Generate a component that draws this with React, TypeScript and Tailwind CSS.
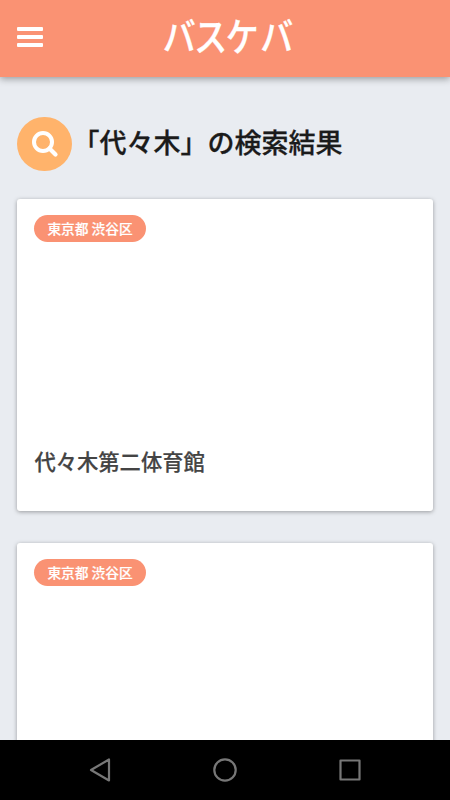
import { useState } from 'react'

type Court = {
  id: number
  area: string
  name?: string
}

const courts: Court[] = [
  { id: 1, area: '東京都 渋谷区', name: '代々木第二体育館' },
  { id: 2, area: '東京都 渋谷区' },
]

const Header = () => {
  const [open, setOpen] = useState(false)

  return (
    <header className="relative z-10 flex h-[77px] shrink-0 items-center bg-[#fa9273] px-[17px] shadow-[0_2px_7px_rgba(0,0,0,0.35)]">
      <button
        type="button"
        aria-label="メニュー"
        aria-expanded={open}
        onClick={() => setOpen(!open)}
        className="mb-[3px] flex w-[26px] flex-col gap-1"
      >
        <span className="h-1 rounded-[1px] bg-white" />
        <span className="h-1 rounded-[1px] bg-white" />
        <span className="h-1 rounded-[1px] bg-white" />
      </button>
      <h1 className="flex flex-1 justify-center pr-[19px]">
        <svg
          width="150"
          height="76"
          viewBox="0 -8 150 76"
          fill="#fff"
          stroke="#fff"
          strokeWidth="0.3"
          className="overflow-visible"
        >
          <text
            x="9 41.5 74 109.5"
            y="37.8"
            fontSize="34"
            transform="scale(0.97 1.12)"
            className="font-medium"
          >
            バスケバ
          </text>
        </svg>
      </h1>
    </header>
  )
}

const CourtCard = ({ court }: { court: Court }) => (
  <article className="flex h-[312px] shrink-0 flex-col items-start justify-between rounded-[3px] bg-white px-[17px] pt-4 pb-[34px] shadow-[0_1px_4px_rgba(0,0,0,0.35)]">
    <span className="flex h-[27px] items-center rounded-full bg-[#fa9273] px-[13px] text-[13.7px] font-medium text-white [-webkit-text-stroke:0.2px_#fff]">
      {court.area}
    </span>
    {court.name && (
      <h3 className="text-[21.3px] leading-8 font-medium text-[#444] [-webkit-text-stroke:0.2px_#444]">
        {court.name}
      </h3>
    )}
  </article>
)

const NavigationBar = () => (
  <footer className="flex h-[60px] shrink-0 items-center justify-center gap-[97px] bg-black">
    <svg width="28" height="28" viewBox="0 0 28 28" fill="none" stroke="#777" strokeWidth="2.2" strokeLinejoin="round">
      <path d="M23 3.5v21L5 14z" />
    </svg>
    <svg width="28" height="28" viewBox="0 0 28 28" fill="none" stroke="#777" strokeWidth="2.2">
      <circle cx="14" cy="14" r="10.7" />
    </svg>
    <svg width="28" height="28" viewBox="0 0 28 28" fill="none" stroke="#777" strokeWidth="2.2" strokeLinejoin="round">
      <rect x="4.5" y="4.5" width="19" height="19" />
    </svg>
  </footer>
)

const App = () => {
  return (
    <div className="flex h-[800px] w-[450px] flex-col overflow-hidden bg-[#e9ecf1] font-['Noto_Sans_CJK_JP',sans-serif]">
      <Header />
      <main className="flex min-h-0 flex-1 flex-col overflow-hidden px-[17.4px] pt-[40px]">
        <div className="mb-7 flex shrink-0 items-center">
          <span className="flex h-[54px] w-[55px] items-center justify-center rounded-full bg-[#ffb36b]">
            <svg width="28" height="28" viewBox="0 0 28 28" fill="none" stroke="#fff">
              <circle cx="12" cy="12" r="9" strokeWidth="4" />
              <path d="M18.5 18.5l6 6" strokeWidth="4.2" strokeLinecap="round" />
            </svg>
          </span>
          <h2 className="pb-1 text-[27px] leading-10 font-medium whitespace-nowrap text-[#1b1b1b] [-webkit-text-stroke:0.3px_#1b1b1b]">
            「代々木」の検索結果
          </h2>
        </div>
        <div className="flex flex-col gap-8">
          {courts.map((court) => (
            <CourtCard key={court.id} court={court} />
          ))}
        </div>
      </main>
      <NavigationBar />
    </div>
  )
}

export default App
